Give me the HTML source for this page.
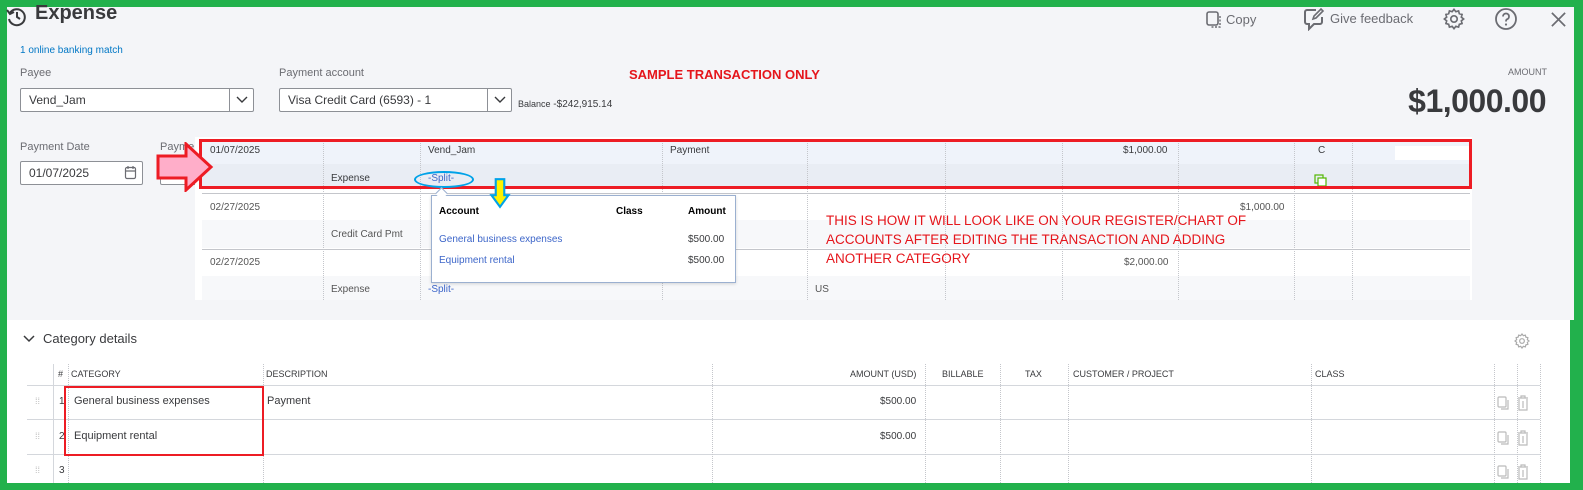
<!DOCTYPE html>
<html><head><meta charset="utf-8"><style>
*{box-sizing:border-box;margin:0;padding:0}
body{width:1583px;height:490px;overflow:hidden;background:#22b14c;font-family:"Liberation Sans",sans-serif;color:#393a3d;position:relative}
.a{position:absolute;white-space:nowrap}
.top{position:absolute;left:7px;top:7px;width:1567px;height:313px;background:#f4f5f8}
.bot{position:absolute;left:7px;top:320px;width:1563px;height:163px;background:#fff}
.inp{position:absolute;background:#fff;border:1px solid #8d9096;border-radius:2px;font-size:12px;padding:0 8px;line-height:22px}
.lbl{font-size:11px;color:#6b6c72}
.vl{position:absolute;border-left:1px dotted #c4c6cb}
.hl{position:absolute;height:1px;background:#d4d7dc}
.t{font-size:10px;color:#393a3d}
.red{color:#e5151b;font-family:"Liberation Sans Narrow","Liberation Sans",sans-serif}
.link{color:#3d66c9}
</style></head><body>
<div class="top"></div>
<div class="bot"></div>

<!-- header -->
<svg class="a" style="left:5px;top:5px" width="22" height="22" viewBox="0 0 22 22"><path d="M5 8 A8 8 0 1 1 4 14" fill="none" stroke="#393a3d" stroke-width="2"/><path d="M2 5 L5 9 L9 7" fill="none" stroke="#393a3d" stroke-width="2"/><path d="M12 7 V12 L15 14" fill="none" stroke="#393a3d" stroke-width="2"/></svg>
<div class="a" style="left:35px;top:2px;font-size:20px;font-weight:bold;color:#393a3d">Expense</div>
<svg class="a" style="left:1205px;top:10px" width="18" height="20" viewBox="0 0 18 20"><rect x="2" y="2" width="11" height="13" rx="2" fill="none" stroke="#6b6c72" stroke-width="1.6"/><path d="M15 6 V17 H5" fill="none" stroke="#6b6c72" stroke-width="1.4" stroke-dasharray="2 1.5"/></svg>
<div class="a" style="left:1226px;top:12px;font-size:13px;color:#6b6c72">Copy</div>
<svg class="a" style="left:1302px;top:7px" width="24" height="24" viewBox="0 0 24 24"><path d="M14 3 H5 a2 2 0 0 0 -2 2 V15 a2 2 0 0 0 2 2 H7 V22 L12 17 H18 a2 2 0 0 0 2 -2 V10" fill="none" stroke="#6b6c72" stroke-width="2"/><path d="M11 12 L12 9 L19 2 L21 4 L14 11 Z" fill="none" stroke="#6b6c72" stroke-width="1.6"/></svg>
<div class="a" style="left:1330px;top:11px;font-size:13px;color:#6b6c72">Give feedback</div>
<svg class="a" style="left:1443px;top:8px" width="22" height="22" viewBox="0 0 24 24"><path d="M12 1.5l2 2.5 3-.8.8 3 3 .8-.8 3 2.5 2-2.5 2 .8 3-3 .8-.8 3-3-.8-2 2.5-2-2.5-3 .8-.8-3-3-.8.8-3L1.5 12 4 10l-.8-3 3-.8.8-3 3 .8z" fill="none" stroke="#6b6c72" stroke-width="1.8"/><circle cx="12" cy="12" r="3.5" fill="none" stroke="#6b6c72" stroke-width="1.8"/></svg>
<svg class="a" style="left:1494px;top:7px" width="24" height="24" viewBox="0 0 24 24"><circle cx="12" cy="12" r="10" fill="none" stroke="#6b6c72" stroke-width="1.8"/><path d="M9 9.5 a3 3 0 1 1 4 2.8 c-1 .4 -1 1 -1 2.2" fill="none" stroke="#6b6c72" stroke-width="1.8"/><circle cx="12" cy="17.5" r="1.1" fill="#6b6c72"/></svg>
<svg class="a" style="left:1550px;top:11px" width="17" height="17" viewBox="0 0 18 18"><path d="M2 2 L16 16 M16 2 L2 16" stroke="#6b6c72" stroke-width="1.8"/></svg>

<div class="a" style="left:20px;top:45px;font-size:10px;color:#0077c5">1 online banking match</div>
<div class="a lbl" style="left:20px;top:67px">Payee</div>
<div class="inp" style="left:20px;top:88px;width:234px;height:24px">Vend_Jam</div>
<div class="a" style="left:229px;top:89px;width:1px;height:22px;background:#8d9096"></div>
<svg class="a" style="left:236px;top:95px" width="12" height="10"><path d="M1 2 L6 7 L11 2" fill="none" stroke="#393a3d" stroke-width="1.4"/></svg>
<div class="a lbl" style="left:279px;top:67px">Payment account</div>
<div class="inp" style="left:279px;top:88px;width:233px;height:24px">Visa Credit Card (6593) - 1</div>
<div class="a" style="left:487px;top:89px;width:1px;height:22px;background:#8d9096"></div>
<svg class="a" style="left:494px;top:95px" width="12" height="10"><path d="M1 2 L6 7 L11 2" fill="none" stroke="#393a3d" stroke-width="1.4"/></svg>
<div class="a" style="left:518px;top:99px;font-size:10px"><span style="font-size:9px">Balance</span> -$242,915.14</div>
<div class="a red" style="left:629px;top:67px;font-size:13px;font-weight:bold">SAMPLE TRANSACTION ONLY</div>
<div class="a" style="right:36px;top:67px;font-size:9px;color:#6b6c72">AMOUNT</div>
<div class="a" style="right:37px;top:83px;font-size:32px;font-weight:bold;color:#393a3d;letter-spacing:-0.5px">$1,000.00</div>

<div class="a lbl" style="left:20px;top:141px">Payment Date</div>
<div class="inp" style="left:20px;top:161px;width:123px;height:24px">01/07/2025</div>
<svg class="a" style="left:124px;top:165px" width="14" height="15"><rect x="1.5" y="2.5" width="10" height="11" rx="1.5" fill="none" stroke="#6b6c72" stroke-width="1.2"/><path d="M1.5 6 H11.5 M4 1 V4 M9 1 V4" stroke="#6b6c72" stroke-width="1.2"/></svg>
<div class="a lbl" style="left:160px;top:141px">Payme</div>
<div class="inp" style="left:160px;top:161px;width:40px;height:24px"></div>

<!-- register -->
<div class="a" style="left:195px;top:137px;width:1277px;height:163px;background:#fff"></div>
<div class="a" style="left:202px;top:141px;width:1268px;height:23px;background:#eff3fa"></div>
<div class="a" style="left:202px;top:164px;width:1268px;height:23px;background:#e9edf4"></div>
<div class="a" style="left:202px;top:220px;width:1268px;height:28px;background:#f7f8fa"></div>
<div class="a" style="left:202px;top:276px;width:1268px;height:24px;background:#f7f8fa"></div>
<div class="hl" style="left:202px;top:193px;width:1268px;background:#c4c6cb"></div>
<div class="hl" style="left:202px;top:249px;width:1268px;background:#c4c6cb"></div>
<div class="vl" style="left:323px;top:141px;height:159px"></div>
<div class="vl" style="left:420px;top:141px;height:159px"></div>
<div class="vl" style="left:662px;top:141px;height:159px"></div>
<div class="vl" style="left:807px;top:141px;height:159px"></div>
<div class="vl" style="left:945px;top:141px;height:159px"></div>
<div class="vl" style="left:1062px;top:141px;height:159px"></div>
<div class="vl" style="left:1178px;top:141px;height:159px"></div>
<div class="vl" style="left:1294px;top:141px;height:159px"></div>
<div class="vl" style="left:1352px;top:141px;height:159px"></div>
<div class="a" style="left:1395px;top:146px;width:75px;height:14px;background:#fff"></div>

<div class="a t" style="left:210px;top:145px">01/07/2025</div>
<div class="a t" style="left:428px;top:145px">Vend_Jam</div>
<div class="a t" style="left:670px;top:145px">Payment</div>
<div class="a t" style="left:1123px;top:145px">$1,000.00</div>
<div class="a t" style="left:1318px;top:145px">C</div>
<div class="a t" style="left:331px;top:173px">Expense</div>
<div class="a t link" style="left:428px;top:173px">-Split-</div>
<svg class="a" style="left:1314px;top:174px" width="14" height="13"><rect x="1" y="1" width="8" height="8" fill="none" stroke="#53b700" stroke-width="1.2"/><rect x="4" y="4" width="8" height="8" fill="#fff" stroke="#53b700" stroke-width="1.2"/></svg>
<div class="a t" style="left:210px;top:202px;color:#555">02/27/2025</div>
<div class="a t" style="left:1240px;top:202px;color:#555">$1,000.00</div>
<div class="a t" style="left:331px;top:229px;color:#555">Credit Card Pmt</div>
<div class="a t" style="left:210px;top:257px;color:#555">02/27/2025</div>
<div class="a t" style="left:1124px;top:257px;color:#555">$2,000.00</div>
<div class="a t" style="left:331px;top:284px;color:#555">Expense</div>
<div class="a t link" style="left:428px;top:284px">-Split-</div>
<div class="a t" style="left:815px;top:284px;color:#555">US</div>

<!-- red box -->
<div class="a" style="left:199px;top:139px;width:1273px;height:50px;border:3px solid #ed1c24"></div>
<!-- ellipse -->
<div class="a" style="left:414px;top:171px;width:60px;height:17px;border:2px solid #00a2e8;border-radius:50%"></div>
<!-- pink arrow -->
<svg class="a" style="left:156px;top:142px" width="58" height="50" viewBox="0 0 58 50"><path d="M2 14 H30 V2 L55 25 L30 48 V36 H2 Z" fill="#ffaec9" stroke="#ed1c24" stroke-width="3"/></svg>

<!-- popup -->
<div class="a" style="left:431px;top:195px;width:305px;height:88px;background:#fff;border:1px solid #9bb0d0;box-shadow:0 1px 3px rgba(0,0,0,.15)"></div>
<div class="a" style="left:437px;top:189px;width:9px;height:9px;background:#fff;border-left:1px solid #9bb0d0;border-top:1px solid #9bb0d0;transform:rotate(45deg)"></div>
<div class="a" style="left:439px;top:206px;font-size:10px;font-weight:bold;color:#000">Account</div>
<div class="a" style="left:616px;top:206px;font-size:10px;font-weight:bold;color:#000">Class</div>
<div class="a" style="left:688px;top:206px;font-size:10px;font-weight:bold;color:#000">Amount</div>
<div class="a t link" style="left:439px;top:234px">General business expenses</div>
<div class="a t" style="left:688px;top:234px">$500.00</div>
<div class="a t link" style="left:439px;top:255px">Equipment rental</div>
<div class="a t" style="left:688px;top:255px">$500.00</div>
<!-- yellow arrow -->
<svg class="a" style="left:489px;top:177px" width="22" height="32" viewBox="0 0 20 30"><path d="M6 2 H14 V17 H18 L10 28 L2 17 H6 Z" fill="#fff200" stroke="#00a2e8" stroke-width="2"/></svg>

<div class="a red" style="left:826px;top:211px;font-size:13.5px;line-height:19px">THIS IS HOW IT WILL LOOK LIKE ON YOUR REGISTER/CHART OF<br>ACCOUNTS AFTER EDITING THE TRANSACTION AND ADDING<br>ANOTHER CATEGORY</div>

<!-- category details -->
<svg class="a" style="left:23px;top:334px" width="12" height="10"><path d="M1 2 L6 7 L11 2" fill="none" stroke="#393a3d" stroke-width="1.5"/></svg>
<div class="a" style="left:43px;top:331px;font-size:13px">Category details</div>
<svg class="a" style="left:1514px;top:333px" width="16" height="16" viewBox="0 0 24 24"><path d="M12 1.5l2 2.5 3-.8.8 3 3 .8-.8 3 2.5 2-2.5 2 .8 3-3 .8-.8 3-3-.8-2 2.5-2-2.5-3 .8-.8-3-3-.8.8-3L1.5 12 4 10l-.8-3 3-.8.8-3 3 .8z" fill="none" stroke="#aaa" stroke-width="1.8"/><circle cx="12" cy="12" r="3.5" fill="none" stroke="#aaa" stroke-width="1.8"/></svg>

<div class="hl" style="left:27px;top:385px;width:1513px"></div>
<div class="hl" style="left:27px;top:419px;width:1513px"></div>
<div class="hl" style="left:27px;top:454px;width:1513px"></div>
<div class="a" style="left:53px;top:364px;width:1px;height:119px;background:#d4d7dc"></div>
<div class="vl" style="left:68px;top:364px;height:119px"></div>
<div class="vl" style="left:263px;top:364px;height:119px"></div>
<div class="vl" style="left:712px;top:364px;height:119px"></div>
<div class="vl" style="left:925px;top:364px;height:119px"></div>
<div class="vl" style="left:1000px;top:364px;height:119px"></div>
<div class="vl" style="left:1068px;top:364px;height:119px"></div>
<div class="vl" style="left:1311px;top:364px;height:119px"></div>
<div class="vl" style="left:1494px;top:364px;height:119px"></div>
<div class="vl" style="left:1517px;top:364px;height:119px"></div>
<div class="vl" style="left:1540px;top:364px;height:119px"></div>

<div class="a" style="left:58px;top:369px;font-size:9px">#</div>
<div class="a" style="left:71px;top:369px;font-size:9px">CATEGORY</div>
<div class="a" style="left:266px;top:369px;font-size:9px">DESCRIPTION</div>
<div class="a" style="left:850px;top:369px;font-size:9px">AMOUNT (USD)</div>
<div class="a" style="left:942px;top:369px;font-size:9px">BILLABLE</div>
<div class="a" style="left:1025px;top:369px;font-size:9px">TAX</div>
<div class="a" style="left:1073px;top:369px;font-size:9px">CUSTOMER / PROJECT</div>
<div class="a" style="left:1315px;top:369px;font-size:9px">CLASS</div>

<div class="a" style="left:35px;top:396px;font-size:9px;color:#bbb">⁞⁞</div>
<div class="a" style="left:35px;top:431px;font-size:9px;color:#bbb">⁞⁞</div>
<div class="a" style="left:35px;top:465px;font-size:9px;color:#bbb">⁞⁞</div>
<div class="a t" style="left:59px;top:396px">1</div>
<div class="a t" style="left:59px;top:431px">2</div>
<div class="a t" style="left:59px;top:465px">3</div>
<div class="a" style="left:74px;top:395px;font-size:11px">General business expenses</div>
<div class="a" style="left:74px;top:430px;font-size:11px">Equipment rental</div>
<div class="a" style="left:267px;top:395px;font-size:11px">Payment</div>
<div class="a t" style="left:880px;top:396px">$500.00</div>
<div class="a t" style="left:880px;top:431px">$500.00</div>

<svg class="a" style="left:1496px;top:395px" width="40" height="16"><rect x="2" y="2" width="8" height="10" rx="1" fill="none" stroke="#bbb" stroke-width="1.2"/><path d="M12 5 V14 H5" fill="none" stroke="#bbb" stroke-width="1.2"/><path d="M22 3 H32 M25 3 V1 H29 V3 M23 4 V15 H31 V4 M27 6 V13" fill="none" stroke="#bbb" stroke-width="1.2"/></svg>
<svg class="a" style="left:1496px;top:430px" width="40" height="16"><rect x="2" y="2" width="8" height="10" rx="1" fill="none" stroke="#bbb" stroke-width="1.2"/><path d="M12 5 V14 H5" fill="none" stroke="#bbb" stroke-width="1.2"/><path d="M22 3 H32 M25 3 V1 H29 V3 M23 4 V15 H31 V4 M27 6 V13" fill="none" stroke="#bbb" stroke-width="1.2"/></svg>
<svg class="a" style="left:1496px;top:464px" width="40" height="16"><rect x="2" y="2" width="8" height="10" rx="1" fill="none" stroke="#bbb" stroke-width="1.2"/><path d="M12 5 V14 H5" fill="none" stroke="#bbb" stroke-width="1.2"/><path d="M22 3 H32 M25 3 V1 H29 V3 M23 4 V15 H31 V4 M27 6 V13" fill="none" stroke="#bbb" stroke-width="1.2"/></svg>

<div class="a" style="left:64px;top:386px;width:200px;height:70px;border:2px solid #ed1c24"></div>
</body></html>
